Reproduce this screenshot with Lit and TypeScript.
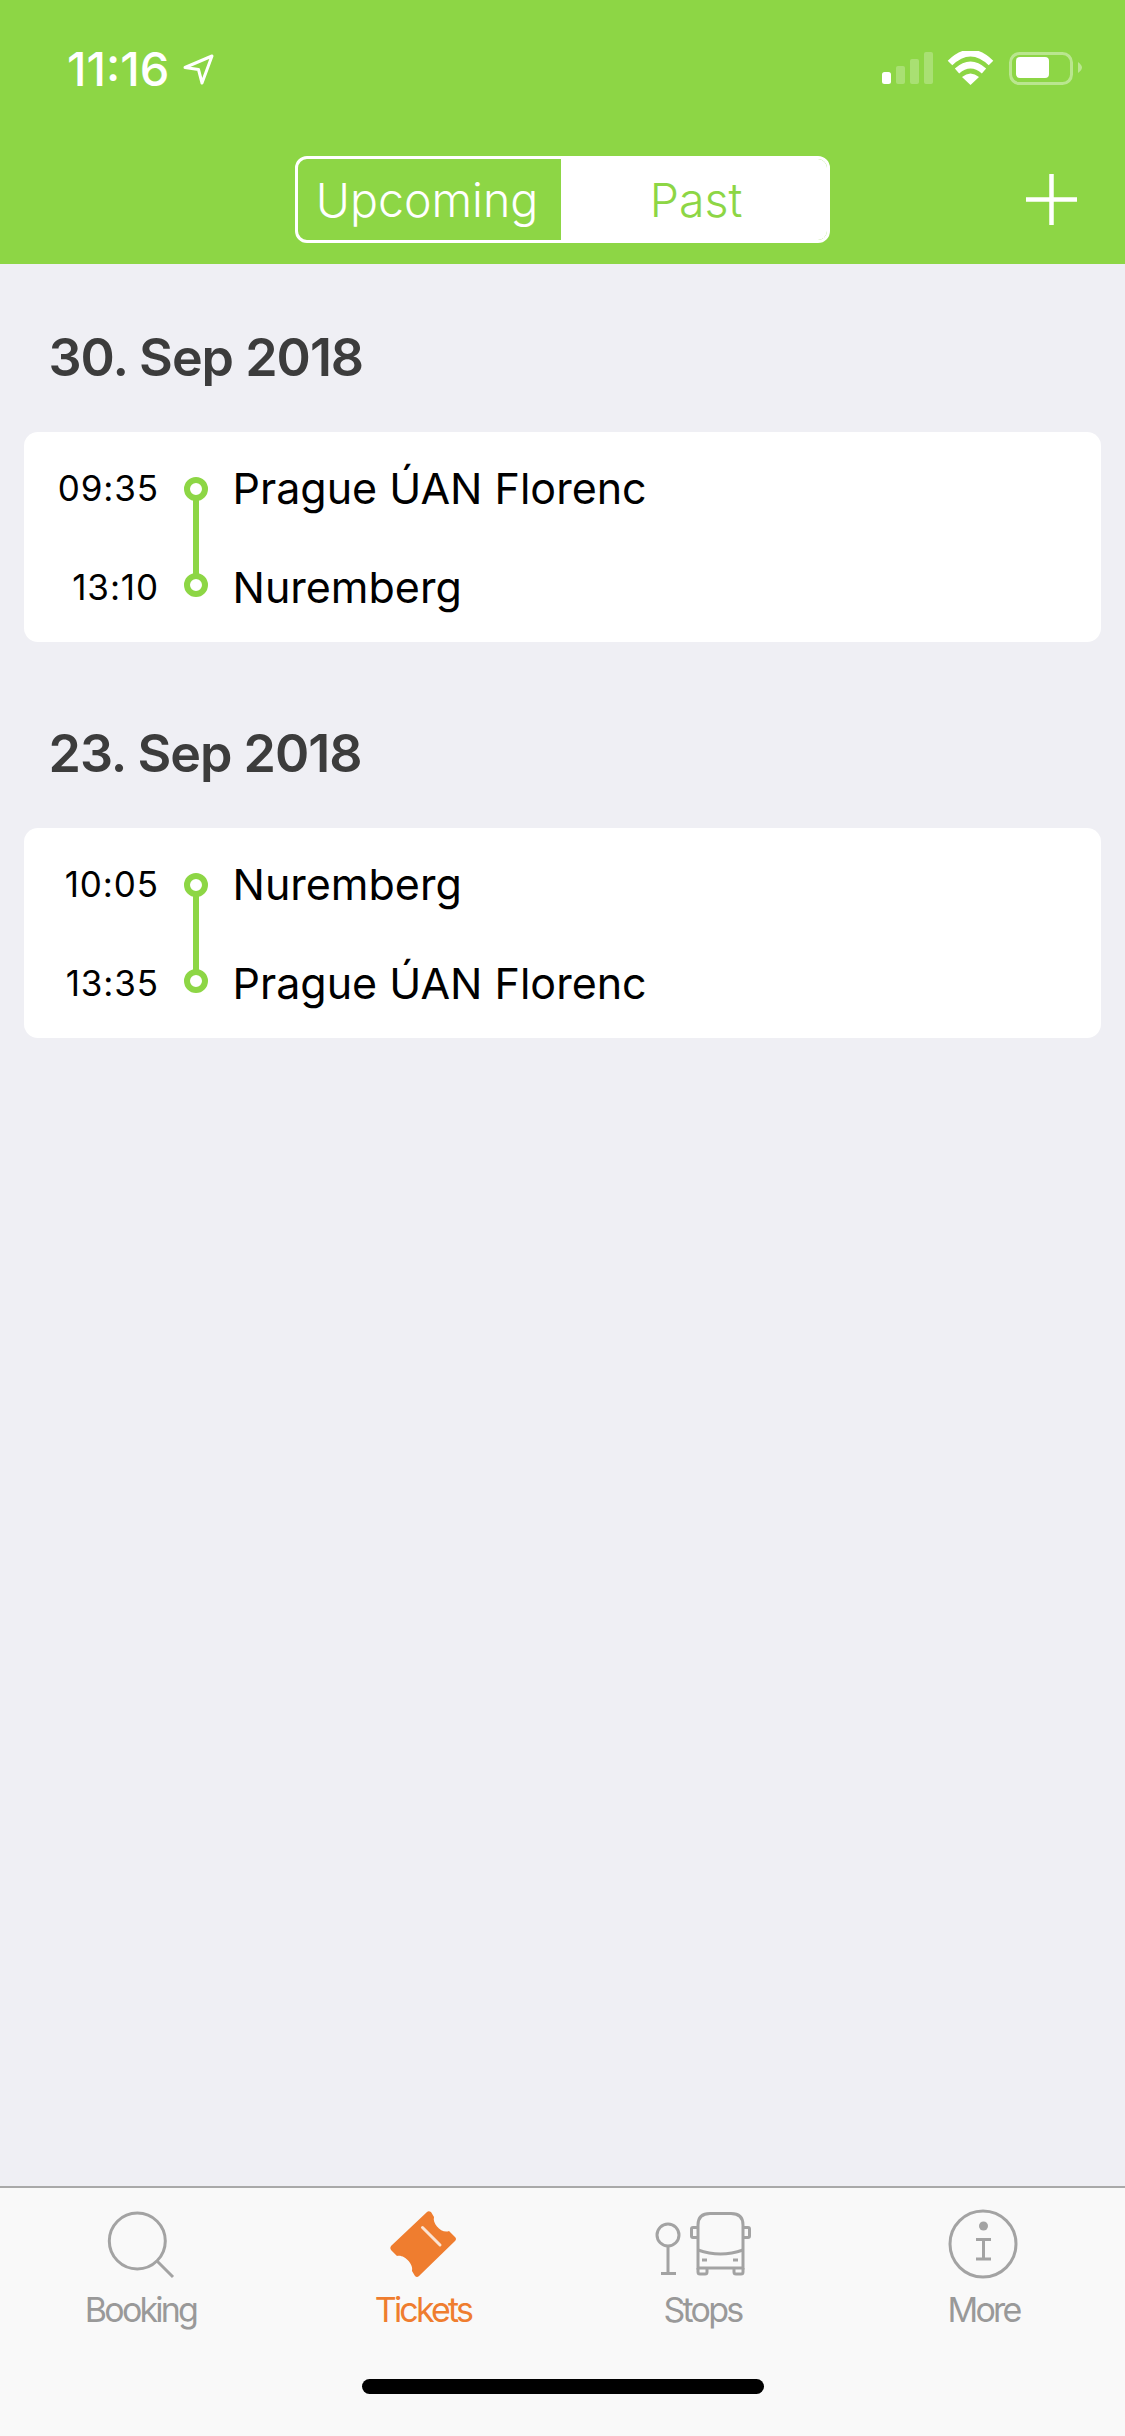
import { LitElement, html, css, svg } from "lit";
import { customElement } from "lit/decorators.js";

interface Stop { time: string; name: string; }
interface Trip { date: string; stops: Stop[]; }

const TRIPS: Trip[] = [
  { date: "30. Sep 2018", stops: [{ time: "09:35", name: "Prague ÚAN Florenc" }, { time: "13:10", name: "Nuremberg" }] },
  { date: "23. Sep 2018", stops: [{ time: "10:05", name: "Nuremberg" }, { time: "13:35", name: "Prague ÚAN Florenc" }] },
];

const ICON_SEARCH = svg`
  <circle cx="45.3" cy="36" r="28" fill="none" stroke="#a3a3a3" stroke-width="3"/>
  <path d="M65.5 56.5 L81 72" fill="none" stroke="#a3a3a3" stroke-width="3"/>`;

const ICON_TICKET = svg`
  <g transform="translate(17 6)">
    <path fill="#ef7d2f" d="M37 1 Q38.6 -0.5 41 1 L44 6 C42 13 52 23 59 20 L65 26 Q67 28 65 30 L29 65 Q27 67 25 65 L22 60 C24 53 14 43 7 45 L1 39 Q-0.5 37 1 35 Z"/>
    <path d="M32.5 16.5 L50 34" stroke="#fbe3d2" stroke-width="3" stroke-linecap="round"/>
  </g>`;

const ICON_STOPS = svg`
  <g fill="none" stroke="#a3a3a3" stroke-width="3">
    <circle cx="14" cy="30" r="11"/>
    <path d="M14 41 V68 M7 68.5 H22"/>
    <path d="M44 63 V20 Q44 8.5 56 8.5 H77 Q89 8.5 89 20 V63 Z"/>
    <path d="M44 63 V67 Q44 69 46 69 H51 Q53 69 53 67 V63 M80 63 V67 Q80 69 82 69 H87 Q89 69 89 67 V63"/>
    <path d="M44 45 Q66.5 53 89 45"/>
    <path d="M43 22.5 H39 Q37.5 22.5 37.5 24 V31 Q37.5 32.5 39 32.5 H43 M90 22.5 H94 Q95.5 22.5 95.5 24 V31 Q95.5 32.5 94 32.5 H90"/>
    <path d="M48 55 H53 M79 55 H84"/>
  </g>`;

const ICON_MORE = svg`
  <g fill="none" stroke="#a3a3a3">
    <ellipse cx="48" cy="39" rx="33" ry="33" stroke-width="3"/>
    <path d="M41 34.5 H56 M48.5 34.5 V54 M41 54 H56" stroke-width="3"/>
  </g>
  <circle cx="48.5" cy="21" r="4.5" fill="#a3a3a3"/>`;

const TABS = [
  { label: "Booking", icon: ICON_SEARCH, active: false },
  { label: "Tickets", icon: ICON_TICKET, active: true },
  { label: "Stops", icon: ICON_STOPS, active: false },
  { label: "More", icon: ICON_MORE, active: false },
];

@customElement("app-root")
export class AppRoot extends LitElement {
  static styles = css`
    :host {
      display: flex;
      flex-direction: column;
      min-height: 2436px;
      background: #efeff4;
      font-family: Inter, "Liberation Sans", sans-serif;
    }
    .header {
      height: 264px;
      box-sizing: border-box;
      background: #8dd645;
      padding-top: 43px;
      display: flex;
      flex-direction: column;
      color: #fff;
    }
    .status {
      height: 52px;
      display: flex;
      align-items: center;
      justify-content: space-between;
      padding: 0 43px 0 67px;
    }
    .status-left { display: flex; align-items: center; gap: 14px; }
    .clock { font-size: 47px; font-weight: 500; line-height: 52px; }
    .status-right { display: block; }
    .nav {
      margin-top: 61px;
      display: grid;
      grid-template-columns: 1fr 535px 1fr;
      align-items: center;
    }
    .segment {
      grid-column: 2;
      height: 87px;
      box-sizing: border-box;
      border: 3px solid #fff;
      border-radius: 12px;
      display: grid;
      grid-template-columns: 263px 1fr;
      overflow: hidden;
      font-size: 46.5px;
      font-weight: 300;
    }
    .seg { display: flex; align-items: center; justify-content: center; }
    .seg.on { color: #fff; padding-right: 5px; }
    .seg.off { background: #fff; color: #8dd645; padding-left: 4px; }
    .plus { justify-self: end; margin-right: 48px; display: block; }
    .main {
      flex: 1;
      padding: 0 24px;
      display: flex;
      flex-direction: column;
      gap: 18px;
    }
    .day-title {
      margin: 0;
      height: 168px;
      box-sizing: border-box;
      padding: 62px 0 0 24.5px;
      font-size: 52px;
      line-height: 64px;
      font-weight: 600;
      letter-spacing: -1px;
      color: #3c3c3c;
    }
    .card {
      background: #fff;
      border-radius: 14px;
      padding: 9px 0;
    }
    .row {
      height: 96px;
      display: grid;
      grid-template-columns: 134px 76px 1fr;
      align-items: center;
    }
    .time { font-size: 35px; letter-spacing: 0.9px; text-align: right; color: #000; margin-right: -1px; }
    .name { font-size: 43px; color: #000; margin-left: -1.5px; }
    .row:first-child .time, .row:first-child .name { padding-bottom: 2px; }
    .row:last-child .time, .row:last-child .name { padding-top: 3px; }
    .rail { position: relative; height: 100%; display: flex; align-items: center; justify-content: center; }
    .dot {
      width: 24px;
      height: 24px;
      box-sizing: border-box;
      border: 6px solid #8dd645;
      border-radius: 50%;
      background: #fff;
      position: relative;
      z-index: 1;
    }
    .row:first-child .rail::after {
      content: "";
      position: absolute;
      left: 50%;
      top: 50%;
      width: 6px;
      margin-left: -3px;
      height: 96px;
      background: #8dd645;
    }
    .tabbar {
      height: 250px;
      box-sizing: border-box;
      background: #f9f9f9;
      border-top: 2px solid #a9a9a9;
      padding: 17px 0 0 1.5px;
      display: flex;
      flex-direction: column;
    }
    .tabs { display: grid; grid-template-columns: repeat(4, 281px); }
    .tab { display: flex; flex-direction: column; align-items: center; }
    .tab svg { display: block; }
    .tab-label {
      font-size: 34px;
      line-height: 44px;
      margin: 3px 3px 0 0;
      font-weight: 400;
      letter-spacing: -2.8px;
      color: #999;
    }
    .tab.active .tab-label { color: #ef7d2f; margin-right: 0; }
    .home {
      align-self: center;
      margin: 47px 0 0 -1.5px;
      width: 402px;
      height: 15px;
      border-radius: 8px;
      background: #000;
    }
  `;

  private renderStatusIcons() {
    return html`<svg class="status-right" width="200" height="36" viewBox="882 52 200 36">
      <rect x="882" y="73" width="9" height="12" rx="2.5" fill="#fff"/>
      <rect x="896" y="67" width="9" height="18" rx="2" fill="#fff" opacity=".25"/>
      <rect x="910" y="60" width="9" height="25" rx="2" fill="#fff" opacity=".25"/>
      <rect x="924" y="53" width="9" height="32" rx="2" fill="#fff" opacity=".25"/>
      <path d="M950 64 Q970.5 44 991 64 M957 72 Q970.5 60 984 72" fill="none" stroke="#fff" stroke-width="6.5"/>
      <path d="M962 78 Q970.5 71 979 78 L970.5 86 Z" fill="#fff"/>
      <rect x="1010.5" y="54.5" width="61" height="30" rx="9" fill="none" stroke="#fff" stroke-opacity=".4" stroke-width="3"/>
      <rect x="1016" y="58" width="33" height="21" rx="4" fill="#fff"/>
      <path d="M1078 63 Q1082 66 1082 68.5 Q1082 71 1078 74 Z" fill="#fff" fill-opacity=".4"/>
    </svg>`;
  }

  private renderTrip(t: Trip) {
    return html`<section>
      <h2 class="day-title">${t.date}</h2>
      <div class="card">
        ${t.stops.map(s => html`<div class="row">
          <div class="time">${s.time}</div>
          <div class="rail"><div class="dot"></div></div>
          <div class="name">${s.name}</div>
        </div>`)}
      </div>
    </section>`;
  }

  render() {
    return html`
      <div class="header">
        <div class="status">
          <div class="status-left">
            <span class="clock">11:16</span>
            <svg width="31" height="31" viewBox="0 0 31 31">
              <path d="M2 13.5 L29 2 L19 29 L15.5 15.5 Z" fill="none" stroke="#fff" stroke-width="3" stroke-linejoin="round"/>
            </svg>
          </div>
          ${this.renderStatusIcons()}
        </div>
        <div class="nav">
          <div class="segment">
            <div class="seg on">Upcoming</div>
            <div class="seg off">Past</div>
          </div>
          <svg class="plus" width="51" height="51" viewBox="0 0 51 51">
            <path d="M25.5 0 V51 M0 25.5 H51" stroke="#fff" stroke-width="4.5"/>
          </svg>
        </div>
      </div>
      <div class="main">${TRIPS.map(t => this.renderTrip(t))}</div>
      <div class="tabbar">
        <div class="tabs">
          ${TABS.map(t => html`<div class="tab ${t.active ? "active" : ""}">
            <svg width="100" height="80" viewBox="0 0 100 80">${t.icon}</svg>
            <span class="tab-label">${t.label}</span>
          </div>`)}
        </div>
        <div class="home"></div>
      </div>
    `;
  }
}
